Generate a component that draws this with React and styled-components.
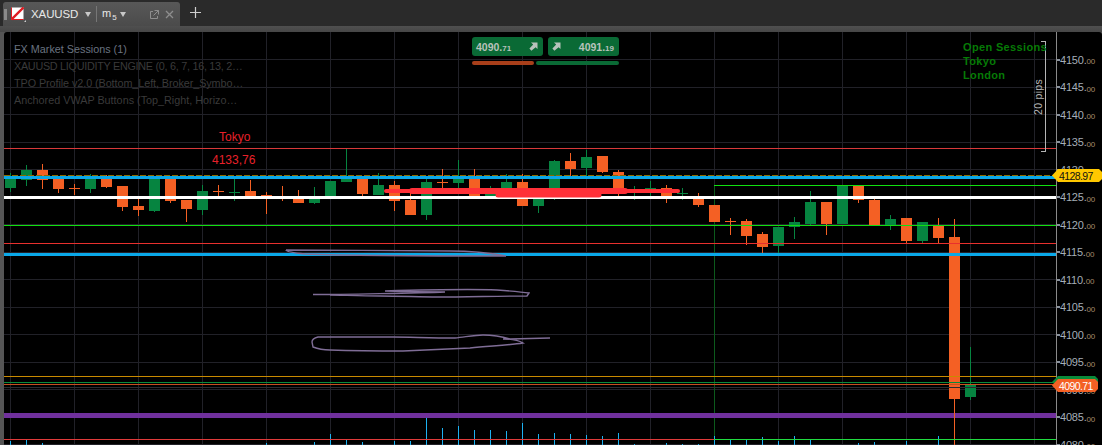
import React from 'react'
import styled, { createGlobalStyle } from 'styled-components'

const GlobalStyle = createGlobalStyle`
  html, body { margin: 0; padding: 0; background: #000; }
  body { font-family: "Liberation Sans", Arial, sans-serif; overflow: hidden; }
`

const Page = styled.div`
  width: 1102px;
  height: 445px;
  display: flex;
  flex-direction: column;
  overflow: hidden;
  background: #2a2a2a;
`
const TabBar = styled.div`
  height: 26px;
  display: flex;
  align-items: flex-end;
  padding-left: 3px;
  flex-shrink: 0;
`
const Tab = styled.div`
  width: 177px;
  height: 24px;
  box-sizing: border-box;
  padding-left: 1px;
  display: flex;
  align-items: center;
  background: linear-gradient(#585858, #4b4b4b);
  border-radius: 3px 3px 0 0;
  color: #e8e8e8;
`
const Grip = styled.span`
  width: 3px;
  height: 11px;
  margin-right: 4px;
  background-image: radial-gradient(#8a8a8a 0.6px, transparent 0.7px);
  background-size: 1.5px 2px;
`
const Symbol = styled.span`
  font-size: 11.5px;
  margin-left: 5px;
  width: 51px;
  letter-spacing: -0.1px;
`
const Caret = styled.span`
  width: 0;
  height: 0;
  margin-left: ${(p) => p.$left}px;
  border-left: 3px solid transparent;
  border-right: 3px solid transparent;
  border-top: 5px solid #c8c8c8;
`
const Divider = styled.span`
  width: 1px;
  height: 16px;
  background: #777;
  margin: 0 5px;
`
const Period = styled.span`
  font-size: 11px;
  width: 18px;
  position: relative;
  top: -1px;
  sub { font-size: 8px; line-height: 0; margin-left: 1px; }
`
const TabIcon = styled.svg`
  width: 9px;
  height: 9px;
  margin-left: ${(p) => p.$left}px;
  stroke: #8e8e8e;
  fill: none;
`
const PlusButton = styled.div`
  margin: 0 0 4px 9px;
  height: 20px;
  display: flex;
  align-items: center;
`
const Strip = styled.div`
  height: 6px;
  flex-shrink: 0;
  background: linear-gradient(#4f4f4f, #464646);
`
const Body = styled.div`
  flex: 1;
  display: flex;
  min-height: 0;
  background: #555;
`
const LeftEdge = styled.div`
  width: 4px;
  flex-shrink: 0;
`
const Chart = styled.div`
  flex: 1;
  position: relative;
  display: flex;
  background: #000;
  overflow: hidden;
  border-radius: 3px 3px 0 0;
`
const Plot = styled.svg`
  width: 1052px;
  height: 413px;
  display: block;
  flex-shrink: 0;
`
const Axis = styled.div`
  flex: 1;
  border-left: 1px solid #8a8a8a;
  box-sizing: border-box;
  padding-top: 14px;
  display: flex;
  flex-direction: column;
`
const AxisRow = styled.div`
  height: 27.5px;
  flex-shrink: 0;
  display: flex;
  align-items: center;
  font-size: 11px;
  color: #a5aeb8;
  letter-spacing: -0.2px;
  &::before {
    content: '';
    width: 3px;
    height: 2px;
    background: #8a929c;
  }
  small {
    font-size: 8px;
    color: #a58a6a;
    position: relative;
    top: 2px;
  }
`
const Legend = styled.div`
  position: absolute;
  left: 10px;
  top: 9px;
  display: flex;
  flex-direction: column;
`
const LegendItem = styled.div`
  font-size: 10.8px;
  line-height: 17px;
  white-space: nowrap;
  letter-spacing: ${(p) => p.$tracking || 0}px;
  color: ${(p) => (p.$active ? '#6a7380' : '#3a3a3a')};
`
const TradePanel = styled.div`
  position: absolute;
  left: 468px;
  top: 5px;
  width: 147px;
  display: grid;
  grid-template-columns: 71px 71px;
  column-gap: 5px;
  row-gap: 5px;
`
const TradeButton = styled.div`
  height: 19px;
  box-sizing: border-box;
  padding: 0 5px 0 4px;
  border-radius: 3px;
  background: #0a6a35;
  color: #b7c2bb;
  font-size: 10.5px;
  font-weight: bold;
  display: flex;
  align-items: center;
  justify-content: space-between;
  small { font-size: 8px; font-weight: bold; }
`
const BarRow = styled.div`
  grid-column: 1 / 3;
  display: flex;
  gap: 2px;
`
const VolumeBar = styled.div`
  height: 4px;
  border-radius: 2px;
  width: ${(p) => p.$width}px;
  background: ${(p) => p.$color};
`
const Sessions = styled.div`
  position: absolute;
  left: 959px;
  top: 8px;
  color: #067a06;
  font-size: 11px;
  font-weight: bold;
  line-height: 14px;
  letter-spacing: 0.35px;
  white-space: nowrap;
`
const ChartLabel = styled.div`
  position: absolute;
  color: #e8202a;
  font-size: 12px;
  left: ${(p) => p.$x}px;
  top: ${(p) => p.$y}px;
`
const PriceTag = styled.div`
  position: absolute;
  left: 1048px;
  top: ${(p) => p.$y}px;
  width: ${(p) => p.$width}px;
  height: ${(p) => p.$height}px;
  box-sizing: border-box;
  padding-left: 7px;
  background: ${(p) => p.$bg};
  color: ${(p) => p.$color};
  font-size: 10.5px;
  letter-spacing: -0.6px;
  display: flex;
  align-items: center;
  clip-path: polygon(0 50%, 6px 0, calc(100% - 3px) 0, 100% 3px, 100% calc(100% - 3px), calc(100% - 3px) 100%, 6px 100%);
`

const UP = '#068440'
const DOWN = '#f46024'

// x, wick top, body top, body bottom, wick bottom, up
const candles = [
  [10, 173, 176, 188, 192, 1], [26, 165, 170, 180, 186, 1], [42, 164, 170, 180, 189, 0],
  [58, 177, 177, 189, 193, 0], [74, 184, 188, 189, 195, 0], [90, 174, 177, 189, 193, 1],
  [106, 175, 177, 187, 188, 0], [122, 186, 186, 207, 211, 0], [138, 199, 206, 210, 216, 0],
  [154, 177, 177, 211, 212, 1], [170, 177, 178, 201, 203, 0], [186, 200, 200, 209, 222, 0],
  [202, 185, 191, 210, 215, 1], [218, 185, 191, 192, 196, 0], [234, 178, 192, 193, 201, 1],
  [250, 180, 191, 199, 199, 0], [266, 192, 195, 196, 214, 0], [282, 186, 196, 197, 201, 0],
  [298, 190, 199, 203, 203, 0], [314, 187, 199, 203, 204, 1], [330, 181, 181, 196, 196, 1],
  [346, 149, 178, 182, 182, 1], [362, 178, 178, 194, 197, 0], [378, 173, 185, 195, 195, 1],
  [394, 181, 185, 201, 211, 0], [410, 192, 200, 215, 215, 0], [426, 178, 182, 215, 220, 1],
  [442, 169, 182, 183, 188, 0], [458, 160, 178, 183, 188, 1], [474, 169, 178, 196, 196, 0],
  [490, 186, 192, 196, 196, 1], [506, 174, 182, 188, 188, 1], [522, 174, 182, 206, 206, 0],
  [538, 195, 195, 206, 213, 1], [554, 160, 161, 195, 200, 1], [570, 153, 161, 169, 177, 0],
  [586, 150, 157, 168, 177, 1], [602, 156, 156, 172, 173, 0], [618, 170, 172, 189, 196, 0],
  [634, 186, 189, 190, 200, 1], [650, 181, 188, 190, 198, 1], [666, 185, 188, 196, 203, 0],
  [682, 188, 193, 194, 200, 1], [698, 193, 199, 205, 207, 0], [714, 205, 205, 222, 222, 0],
  [730, 218, 221, 222, 235, 0], [746, 219, 221, 236, 245, 0], [762, 232, 234, 247, 253, 0],
  [778, 227, 227, 246, 253, 1], [794, 217, 222, 227, 239, 1], [810, 191, 202, 224, 225, 1],
  [826, 202, 202, 224, 235, 0], [842, 186, 186, 224, 224, 1], [858, 186, 186, 200, 203, 0],
  [874, 199, 200, 225, 225, 0], [890, 215, 219, 225, 230, 1], [906, 218, 218, 241, 243, 0],
  [922, 222, 222, 241, 243, 1], [938, 218, 226, 238, 243, 0], [954, 219, 237, 399, 445, 0],
  [970, 347, 384, 397, 400, 1],
]

// x -> top of the cyan volume bar
const volumes = {
  10: 441, 26: 440, 42: 443, 266: 443, 314: 442, 330: 434, 346: 440, 362: 442, 394: 441,
  410: 441, 426: 418, 442: 428, 458: 426, 474: 430, 490: 430, 506: 431, 522: 423, 538: 434,
  554: 433, 570: 434, 586: 435, 602: 436, 618: 433, 634: 444, 666: 443, 682: 444, 698: 444,
  714: 436, 730: 440, 746: 440, 762: 437, 778: 441, 794: 436, 810: 440, 858: 443, 874: 442,
  906: 441, 938: 436, 954: 440,
}

const prices = [4150, 4145, 4140, 4135, 4130, 4125, 4120, 4115, 4110, 4105, 4100, 4095, 4090, 4085, 4080]
const gridX = Array.from({ length: 17 }, (_, i) => 10.5 + i * 64)

const FlagIcon = () => (
  <svg width="15" height="15" viewBox="0 0 15 15">
    <rect x="0.5" y="0.5" width="12" height="12" fill="#fff" />
    <path d="M0.5 12.5 L12.5 0.5" stroke="#e01b22" strokeWidth="2.4" />
    <path d="M0.5 0.5 V12.5 H12.5" fill="none" stroke="#e01b22" strokeWidth="1" />
    <path d="M13 15 H15 V13 Z" fill="#cfcfcf" />
  </svg>
)

const PopoutIcon = () => (
  <TabIcon viewBox="0 0 9 9" $left={24}>
    <path d="M3 1.5 H0.5 V8.5 H7.5 V6" />
    <path d="M4.5 0.5 H8.5 V4.5 M8.5 0.5 L3.5 5.5" />
  </TabIcon>
)

const CloseIcon = () => (
  <TabIcon viewBox="0 0 9 9" strokeWidth="1.3" $left={6}>
    <path d="M1 1 L8 8 M8 1 L1 8" />
  </TabIcon>
)

const PlusIcon = () => (
  <svg width="13" height="13" viewBox="0 0 13 13" stroke="#cfcfcf" strokeWidth="1.2">
    <path d="M6.5 1 V12 M1 6.5 H12" />
  </svg>
)

const TradeArrow = () => (
  <svg width="9" height="9" viewBox="0 0 9 9" fill="#b7c2bb">
    <path d="M2 0.5 H8.5 V7 L6.6 5.2 L2.4 8.8 L0.4 6.6 L4.2 2.4 Z" />
  </svg>
)

const Candle = ({ c }) => {
  const [x, wickTop, bodyTop, bodyBottom, wickBottom, up] = c
  const color = up ? UP : DOWN
  return (
    <g>
      <rect x={x} y={wickTop} width="1" height={wickBottom - wickTop} fill={color} />
      <rect x={x - 5} y={bodyTop} width="11" height={bodyBottom - bodyTop} fill={color} />
    </g>
  )
}

export default function App() {
  return (
    <Page>
      <GlobalStyle />
      <TabBar>
        <Tab>
          <Grip />
          <FlagIcon />
          <Symbol>XAUUSD</Symbol>
          <Caret $left={3} />
          <Divider />
          <Period>m<sub>5</sub></Period>
          <Caret $left={0} />
          <PopoutIcon />
          <CloseIcon />
        </Tab>
        <PlusButton><PlusIcon /></PlusButton>
      </TabBar>
      <Strip />
      <Body>
        <LeftEdge />
        <Chart>
          <Plot viewBox="4 32 1052 413">
            <g shapeRendering="crispEdges">
              {gridX.map((x) => (
                <line key={x} x1={x} x2={x} y1="32" y2="445" stroke="#212128" />
              ))}
              {prices.map((p, i) => (
                <line key={p} x1="4" x2="1056" y1={59.5 + i * 27.5} y2={59.5 + i * 27.5} stroke="#212128" />
              ))}
              <line x1="714.5" x2="714.5" y1="185" y2="445" stroke="#0c5a1c" />
              {candles.map((c) => <Candle key={c[0]} c={c} />)}
              {Object.entries(volumes).map(([x, top]) => (
                <rect key={x} x={x} y={top} width="1" height={445 - top} fill="#1cb2f2" />
              ))}

              <line x1="4" x2="1056" y1="148.5" y2="148.5" stroke="#d8393a" />
              <line x1="4" x2="1056" y1="175.5" y2="175.5" stroke="#8a6c00" strokeDasharray="6 2" />
              <rect x="4" y="176" width="1052" height="3" fill="#0aa8e8" />
              <line x1="714" x2="1056" y1="185.5" y2="185.5" stroke="#10e010" />
              <rect x="4" y="196" width="1052" height="3" fill="#fff" />
              <line x1="4" x2="1056" y1="225.5" y2="225.5" stroke="#10e010" />
              <line x1="4" x2="1056" y1="243.5" y2="243.5" stroke="#e8302e" />
              <rect x="4" y="253" width="1052" height="3" fill="#0aa8e8" />
              <line x1="4" x2="1056" y1="376.5" y2="376.5" stroke="#c98a00" />
              <line x1="4" x2="1056" y1="382.5" y2="382.5" stroke="#0a8a3a" />
              <line x1="4" x2="1056" y1="384.5" y2="384.5" stroke="#c8501e" />
              <line x1="4" x2="1056" y1="387.5" y2="387.5" stroke="#2c2c30" />
              <rect x="4" y="413" width="1052" height="5" fill="#70309c" />
              <rect x="954" y="399" width="1" height="46" fill={DOWN} />
              <line x1="4" x2="714" y1="439.5" y2="439.5" stroke="#e03a3a" />
              <line x1="714" x2="1056" y1="439.5" y2="439.5" stroke="#20dc40" />
            </g>

            <g fill="none" stroke="#ff3038" strokeLinecap="round">
              <path d="M386 191 H678" strokeWidth="4" />
              <path d="M412 191 H625" strokeWidth="6" />
              <path d="M498 195 H599" strokeWidth="5" />
            </g>

            <g fill="none" stroke="#7f6d96" strokeWidth="1.4">
              <path d="M286 250 C330 250 420 251 450 251 C470 251 490 253 506 256 C460 256 360 256 305 254 C295 253 286 252 286 250" />
              <path d="M313 294.5 C340 294.5 420 293 445 292 C420 292 400 291.5 385 291 C420 290 470 289 497 290 C510 291 522 292 529 293 L527 296 C500 296 465 297 437 297 C420 297 400 296 380 296 C360 296 340 295 330 295" />
              <path d="M550 338 L510 339 C500 336 490 335 483 335 C475 335 465 337 455 338 C430 338 410 337 393 337 C370 337 340 337 318 337 C314 338 312 340 312 342 L313 347 C318 349 325 350 330 350 C360 351 380 351 403 351 C430 350 450 349 470 348 C490 346 510 345 523 343 C518 340 510 339 503 339" />
            </g>

            <g fill="none" stroke="#b5b5b5" shapeRendering="crispEdges">
              <path d="M1041 41.5 H1045.5 V151.5 H1041" />
            </g>
            <text x="1042" y="97" transform="rotate(-90 1042 97)" textAnchor="middle" fontSize="10.5" fill="#b5b5b5" letterSpacing="0.3">20 pips</text>
          </Plot>

          <Axis>
            {prices.map((p) => (
              <AxisRow key={p}>{p}.<small>00</small></AxisRow>
            ))}
          </Axis>

          <Legend>
            <LegendItem $active>FX Market Sessions (1)</LegendItem>
            <LegendItem $tracking={-0.27}>XAUUSD LIQUIDITY ENGINE (0, 6, 7, 16, 13, 2…</LegendItem>
            <LegendItem $tracking={-0.07}>TPO Profile v2.0 (Bottom_Left, Broker_Symbo…</LegendItem>
            <LegendItem>Anchored VWAP Buttons (Top_Right, Horizo…</LegendItem>
          </Legend>

          <TradePanel>
            <TradeButton>
              <span>4090.<small>71</small></span>
              <TradeArrow />
            </TradeButton>
            <TradeButton>
              <TradeArrow />
              <span>4091.<small>19</small></span>
            </TradeButton>
            <BarRow>
              <VolumeBar $width={62} $color="#a83f1a" />
              <VolumeBar $width={83} $color="#0a6a35" />
            </BarRow>
          </TradePanel>

          <Sessions>
            <div>Open Sessions</div>
            <div>Tokyo</div>
            <div>London</div>
          </Sessions>

          <ChartLabel $x={215} $y={98}>Tokyo</ChartLabel>
          <ChartLabel $x={208} $y={121}>4133,76</ChartLabel>

          <PriceTag $y={137} $width={50} $height={13} $bg="#ffc800" $color="#111">4128.97</PriceTag>
          <PriceTag $y={344} $width={46} $height={12} $bg="#0a8a3a" $color="#0a8a3a" aria-hidden="true" />
          <PriceTag $y={347} $width={46} $height={13} $bg={DOWN} $color="#fff">4090.71</PriceTag>
        </Chart>
      </Body>
    </Page>
  )
}
